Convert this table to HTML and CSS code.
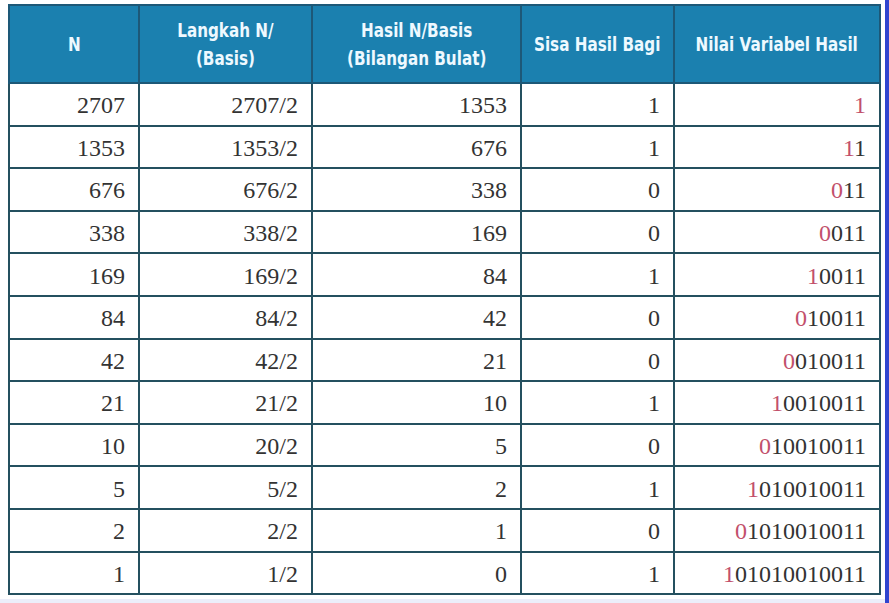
FILE: index.html
```html
<!DOCTYPE html>
<html lang="id">
<head>
<meta charset="utf-8">
<title>Konversi Desimal ke Biner</title>
<link rel="stylesheet" href="styles.css">
</head>
<body>
<div class="frame">
  <div class="wrap">
    <table class="conv">
      <colgroup>
        <col class="c1"><col class="c2"><col class="c3"><col class="c4"><col class="c5">
      </colgroup>
      <thead>
        <tr>
          <th><span class="hd">N</span></th>
          <th><span class="hd">Langkah N/<br>(Basis)</span></th>
          <th><span class="hd">Hasil N/Basis<br>(Bilangan Bulat)</span></th>
          <th><span class="hd">Sisa Hasil Bagi</span></th>
          <th><span class="hd">Nilai Variabel Hasil</span></th>
        </tr>
      </thead>
      <tbody>
        <tr><td>2707</td><td>2707/2</td><td>1353</td><td>1</td><td><span class="hi">1</span></td></tr>
        <tr><td>1353</td><td>1353/2</td><td>676</td><td>1</td><td><span class="hi">1</span>1</td></tr>
        <tr><td>676</td><td>676/2</td><td>338</td><td>0</td><td><span class="hi">0</span>11</td></tr>
        <tr><td>338</td><td>338/2</td><td>169</td><td>0</td><td><span class="hi">0</span>011</td></tr>
        <tr><td>169</td><td>169/2</td><td>84</td><td>1</td><td><span class="hi">1</span>0011</td></tr>
        <tr><td>84</td><td>84/2</td><td>42</td><td>0</td><td><span class="hi">0</span>10011</td></tr>
        <tr><td>42</td><td>42/2</td><td>21</td><td>0</td><td><span class="hi">0</span>010011</td></tr>
        <tr><td>21</td><td>21/2</td><td>10</td><td>1</td><td><span class="hi">1</span>0010011</td></tr>
        <tr><td>10</td><td>20/2</td><td>5</td><td>0</td><td><span class="hi">0</span>10010011</td></tr>
        <tr><td>5</td><td>5/2</td><td>2</td><td>1</td><td><span class="hi">1</span>010010011</td></tr>
        <tr><td>2</td><td>2/2</td><td>1</td><td>0</td><td><span class="hi">0</span>1010010011</td></tr>
        <tr><td>1</td><td>1/2</td><td>0</td><td>1</td><td><span class="hi">1</span>01010010011</td></tr>
      </tbody>
    </table>
  </div>
  <div class="strip"></div>
</div>
</body>
</html>
```

FILE: styles.css
```css
html, body {
  margin: 0;
  padding: 0;
  background: #ffffff;
}

.frame {
  width: 889px;
  height: 603px;
  box-sizing: border-box;
  border-right: 4px solid #3044cf;
  display: flex;
  flex-direction: column;
  overflow: hidden;
}

.wrap {
  flex: 1;
  padding: 4px 0 0 8px;
}

.strip {
  height: 4px;
  background: #eceefa;
}

.conv {
  border-collapse: collapse;
  table-layout: fixed;
  width: 871px;
}

.c1 { width: 130px; }
.c2 { width: 173px; }
.c3 { width: 209px; }
.c4 { width: 153px; }
.c5 { width: 206px; }

.conv th {
  background: #1b80af;
  color: #eef9ff;
  font-family: "DejaVu Sans", sans-serif;
  font-weight: bold;
  font-size: 20px;
  line-height: 28px;
  height: 78px;
  padding: 0 2px;
  white-space: nowrap;
  text-align: center;
  vertical-align: middle;
  border: 2px solid #1d5877;
  box-sizing: border-box;
}

.hd {
  display: inline-block;
  margin: 0 -40px;
  transform: scaleX(0.76);
}

.conv td {
  font-family: "Liberation Serif", "DejaVu Serif", serif;
  font-size: 24px;
  color: #333333;
  text-align: right;
  padding: 3px 13px 0 6px;
  height: 42.6px;
  border: 2px solid #24505f;
  box-sizing: border-box;
  vertical-align: middle;
}

.hi {
  color: #c2506c;
}
```
